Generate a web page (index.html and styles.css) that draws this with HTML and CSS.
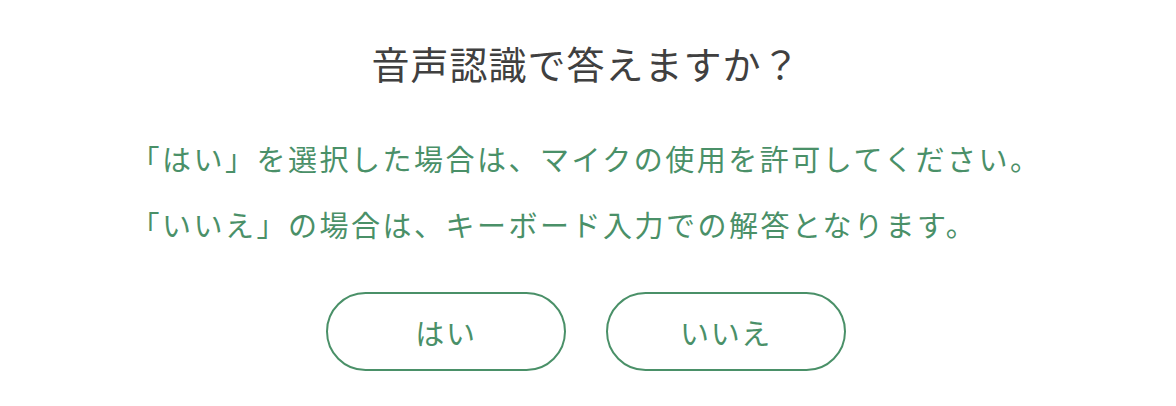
FILE: index.html
```html
<!DOCTYPE html>
<html lang="ja">
<head>
  <meta charset="UTF-8">
  <title>音声認識</title>
  <link rel="stylesheet" href="styles.css">
</head>
<body>

<div class="dialog">
  <h1 class="title">音声認識で答えますか？</h1>

  <div class="notes">
    <p>「はい」を選択した場合は、マイクの使用を許可してください。</p>
    <p>「いいえ」の場合は、キーボード入力での解答となります。</p>
  </div>

  <div class="btn-row">
    <button class="choice" type="button">はい</button>
    <button class="choice" type="button">いいえ</button>
  </div>
</div>

</body>
</html>
```

FILE: styles.css
```css
body {
  margin: 0;
  background: #fff;
  font-family: "Noto Sans CJK JP", "Noto Sans", sans-serif;
}
.dialog {
  display: flex;
  flex-direction: column;
  align-items: center;
  padding: 39px 4px 0 0;
}
.title {
  margin: 0;
  font-size: 38px;
  font-weight: 400;
  line-height: 48px;
  letter-spacing: 1px;
  color: #404040;
}
.notes {
  margin-top: 51px;
  display: flex;
  flex-direction: column;
  gap: 26px;
}
.notes p {
  margin: 0;
  font-size: 29px;
  line-height: 40px;
  letter-spacing: 2.5px;
  color: #4a9068;
}
.btn-row {
  display: flex;
  gap: 40px;
  margin-top: 48px;
}
.choice {
  width: 240px;
  height: 79px;
  border: 2px solid #4a9068;
  border-radius: 40px;
  background: #fff;
  color: #4a9068;
  font-family: inherit;
  font-size: 29px;
  letter-spacing: 1.7px;
  cursor: pointer;
}
```
